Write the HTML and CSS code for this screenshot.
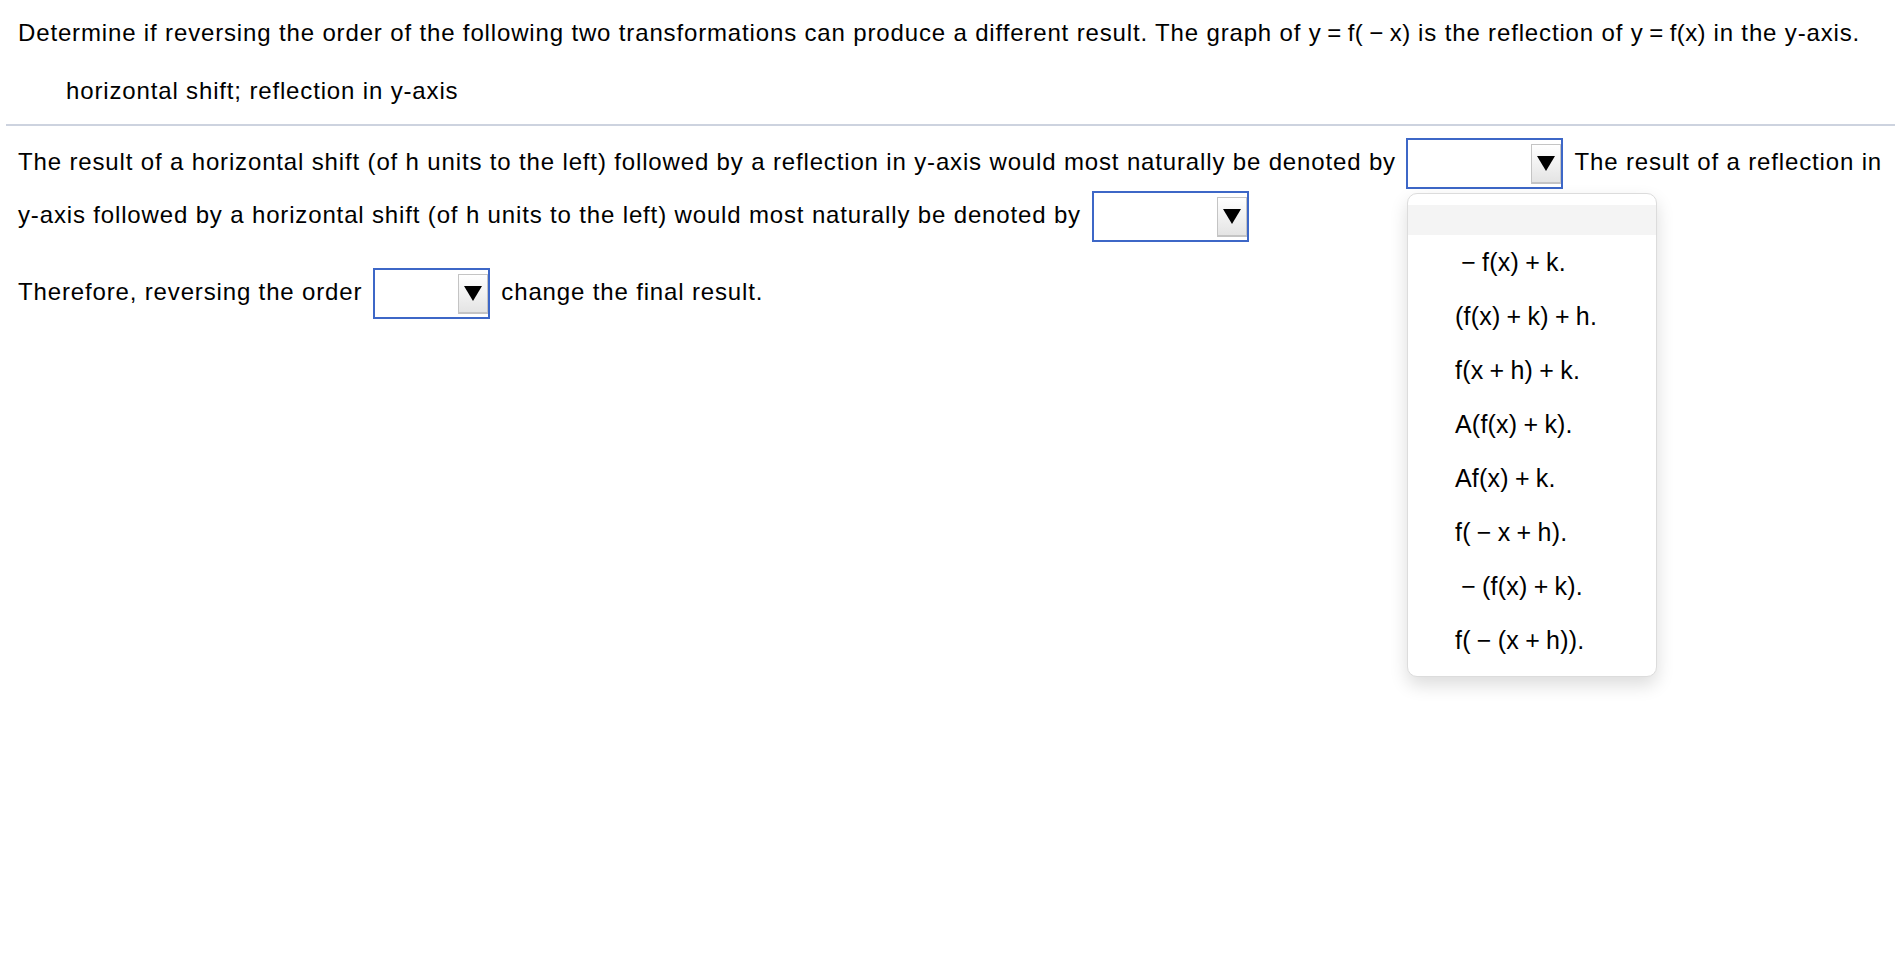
FILE: index.html
```html
<!DOCTYPE html>
<html>
<head>
<meta charset="utf-8">
<link rel="stylesheet" href="styles.css">
</head>
<body>
<div class="page">
  <p class="prompt">Determine if reversing the order of the following two transformations can produce a different result. The graph of <span class="math">y = f( − x)</span> is the reflection of <span class="math">y = f(x)</span> in the y-axis.</p>
  <p class="sub">horizontal shift; reflection in y-axis</p>
  <div class="rule"></div>
  <div class="answer">
    <p class="para">The result of a horizontal shift (of h units to the left) followed by a reflection in y-axis would most naturally be denoted by <span class="select w157"><span class="btn"><svg width="18" height="15" viewBox="0 0 18 15"><polygon points="0,0 18,0 9,15" fill="#000"/></svg></span></span> The result of a reflection in y-axis followed by a horizontal shift (of h units to the left) would most naturally be denoted by <span class="select w157"><span class="btn"><svg width="18" height="15" viewBox="0 0 18 15"><polygon points="0,0 18,0 9,15" fill="#000"/></svg></span></span></p>
    <p class="para second">Therefore, reversing the order <span class="select w117"><span class="btn"><svg width="18" height="15" viewBox="0 0 18 15"><polygon points="0,0 18,0 9,15" fill="#000"/></svg></span></span> change the final result.</p>
  </div>
  <div class="menu">
    <div class="menu-head"></div>
    <ul class="options">
      <li> − f(x) + k.</li>
      <li>(f(x) + k) + h.</li>
      <li>f(x + h) + k.</li>
      <li>A(f(x) + k).</li>
      <li>Af(x) + k.</li>
      <li>f( − x + h).</li>
      <li> − (f(x) + k).</li>
      <li>f( − (x + h)).</li>
    </ul>
  </div>
</div>
</body>
</html>
```

FILE: styles.css
```css
html, body {
  margin: 0;
  padding: 0;
  background: #fff;
}
body {
  font-family: "Liberation Sans", Arial, sans-serif;
  font-size: 24px;
  letter-spacing: 0.85px;
  color: #000;
}
.page {
  position: relative;
  width: 1895px;
  height: 975px;
}
.prompt {
  margin: 0;
  padding: 17px 0 0 18px;
  line-height: 32px;
  white-space: nowrap;
}
.math {
  letter-spacing: 0.4px;
  word-spacing: -1px;
}
.sub {
  margin: 0;
  padding: 26px 0 0 66px;
  line-height: 32px;
}
.rule {
  margin: 17px 0 0 6px;
  height: 2px;
  background: #cdd3df;
}
.answer {
  padding: 10px 6px 0 18px;
}
.para {
  margin: 0;
  line-height: 52px;
}
.second {
  margin-top: 24px;
}
.select {
  display: inline-block;
  box-sizing: border-box;
  height: 51px;
  border: 2px solid #3d67c7;
  background: #fff;
  vertical-align: middle;
  position: relative;
  margin: 0 4px 0 3px;
}
.w157 { width: 157px; }
.w117 { width: 117px; }
.btn {
  position: absolute;
  right: 0;
  top: 4px;
  width: 30px;
  height: 40px;
  box-sizing: border-box;
  border: 1px solid #c4c4c4;
  border-bottom-width: 2px;
  background: linear-gradient(#ffffff, #e4e4e4);
  display: flex;
  align-items: center;
  justify-content: center;
}
.btn svg { display: block; }
.menu {
  position: absolute;
  left: 1407px;
  top: 193px;
  width: 250px;
  height: 484px;
  box-sizing: border-box;
  border: 1px solid #dcdcdc;
  border-radius: 10px;
  background: #fff;
  box-shadow: 0 8px 18px rgba(0,0,0,0.14);
  padding-top: 11px;
  overflow: hidden;
  letter-spacing: 0.2px;
  font-size: 25px;
  word-spacing: -1px;
}
.menu-head {
  height: 30px;
  background: #f4f4f4;
}
.options {
  list-style: none;
  margin: 0;
  padding: 0;
}
.options li {
  height: 54px;
  line-height: 54px;
  padding-left: 47px;
  white-space: pre;
}
```
